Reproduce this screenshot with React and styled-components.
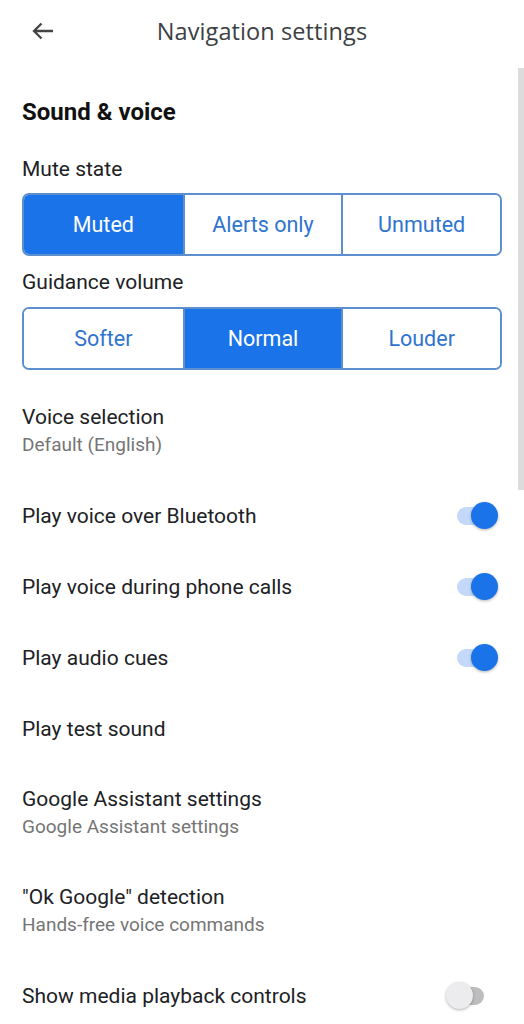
import React from "react";
import styled, { createGlobalStyle } from "styled-components";

const Global = createGlobalStyle`
  html, body { margin: 0; padding: 0; background: #fff; }
  body { font-family: Roboto, "Noto Sans", Arial, sans-serif; color: #202124; }
  * { box-sizing: border-box; }
`;

const Page = styled.div`
  position: relative;
  width: 524px;
  height: 1024px;
  overflow: hidden;
  background: #fff;
`;

const Header = styled.header`
  position: relative;
  height: 62px;
  display: flex;
  align-items: center;
  justify-content: center;
`;

const BackButton = styled.button`
  position: absolute;
  left: 24px;
  top: 13px;
  width: 38px;
  height: 36px;
  border: 0;
  padding: 0;
  background: transparent;
  display: flex;
  align-items: center;
  justify-content: center;
`;

const Title = styled.h1`
  margin: 0;
  font-family: "Open Sans", Roboto, sans-serif;
  font-weight: 400;
  font-size: 23.5px;
  letter-spacing: 0.1px;
  color: #3c4043;
`;

const Scrollbar = styled.div`
  position: absolute;
  right: 0;
  top: 68px;
  width: 6px;
  height: 422px;
  background: #dcdcdc;
`;

const Content = styled.main`
  padding: 0 22px;
`;

const SectionTitle = styled.h2`
  margin: 0;
  height: 82px;
  padding-top: 35px;
  font-size: 24px;
  font-weight: 700;
  line-height: 30px;
  color: #111;
`;

const Label = styled.div`
  height: ${(p) => p.$h}px;
  display: flex;
  align-items: center;
  font-size: 21px;
  color: #202124;
`;

const Segmented = styled.div`
  display: grid;
  grid-template-columns: 1fr 1fr 1fr;
  height: 63px;
  border: 2px solid #5d8fcf;
  border-radius: 7px;
  overflow: hidden;
`;

const Segment = styled.div`
  display: flex;
  align-items: center;
  justify-content: center;
  font-size: 21.5px;
  background: ${(p) => (p.$active ? "#1a73e8" : "#fff")};
  color: ${(p) => (p.$active ? "#fff" : "#2f74cf")};
  & + & {
    border-left: 2px solid ${(p) => (p.$active ? "#1a73e8" : "#5d8fcf")};
  }
`;

const List = styled.div`
  margin: 12px -22px 0;
`;

const Row = styled.div`
  height: ${(p) => (p.$twoLine ? 98 : 71)}px;
  padding: 0 26px 0 22px;
  display: flex;
  align-items: center;
  justify-content: space-between;
`;

const Texts = styled.div`
  display: flex;
  flex-direction: column;
`;

const RowTitle = styled.div`
  font-size: 21px;
  line-height: 28px;
  color: #202124;
`;

const RowSub = styled.div`
  font-size: 19px;
  line-height: 28px;
  color: #757575;
`;

const Switch = styled.div`
  position: relative;
  width: 42px;
  height: 28px;
  margin-right: ${(p) => (p.$on ? 0 : 10)}px;
`;

const Track = styled.div`
  position: absolute;
  left: 1px;
  right: 4px;
  top: 5px;
  height: 18px;
  border-radius: 9px;
  background: ${(p) => (p.$on ? "#c4d9f9" : "#bdbdbd")};
`;

const Thumb = styled.div`
  position: absolute;
  top: 0;
  ${(p) => (p.$on ? "right: 0;" : "left: 0;")}
  width: 27px;
  height: 27px;
  border-radius: 50%;
  background: ${(p) => (p.$on ? "#1a73e8" : "#ececef")};
  box-shadow: 0 1px 3px rgba(0, 0, 0, 0.3);
`;

const Toggle = ({ on }) => (
  <Switch $on={on}>
    <Track $on={on} />
    <Thumb $on={on} />
  </Switch>
);

const rows = [
  { title: "Voice selection", sub: "Default (English)" },
  { title: "Play voice over Bluetooth", toggle: true },
  { title: "Play voice during phone calls", toggle: true },
  { title: "Play audio cues", toggle: true },
  { title: "Play test sound" },
  { title: "Google Assistant settings", sub: "Google Assistant settings" },
  { title: "\"Ok Google\" detection", sub: "Hands-free voice commands" },
  { title: "Show media playback controls", toggle: false },
];

export default function App() {
  return (
    <Page>
      <Global />
      <Header>
        <BackButton aria-label="Back">
          <svg width="26" height="20" viewBox="0 0 26 20">
            <path
              d="M23 10H4M11.5 2.5L4 10l7.5 7.5"
              fill="none"
              stroke="#444"
              strokeWidth="2.3"
            />
          </svg>
        </BackButton>
        <Title>Navigation settings</Title>
      </Header>
      <Scrollbar />
      <Content>
        <SectionTitle>Sound &amp; voice</SectionTitle>
        <Label $h={49}>Mute state</Label>
        <Segmented>
          <Segment $active>Muted</Segment>
          <Segment>Alerts only</Segment>
          <Segment>Unmuted</Segment>
        </Segmented>
        <Label $h={51}>Guidance volume</Label>
        <Segmented>
          <Segment>Softer</Segment>
          <Segment $active>Normal</Segment>
          <Segment>Louder</Segment>
        </Segmented>
        <List>
          {rows.map((r) => (
            <Row key={r.title} $twoLine={!!r.sub}>
              <Texts>
                <RowTitle>{r.title}</RowTitle>
                {r.sub && <RowSub>{r.sub}</RowSub>}
              </Texts>
              {r.toggle !== undefined && <Toggle on={r.toggle} />}
            </Row>
          ))}
        </List>
      </Content>
    </Page>
  );
}
